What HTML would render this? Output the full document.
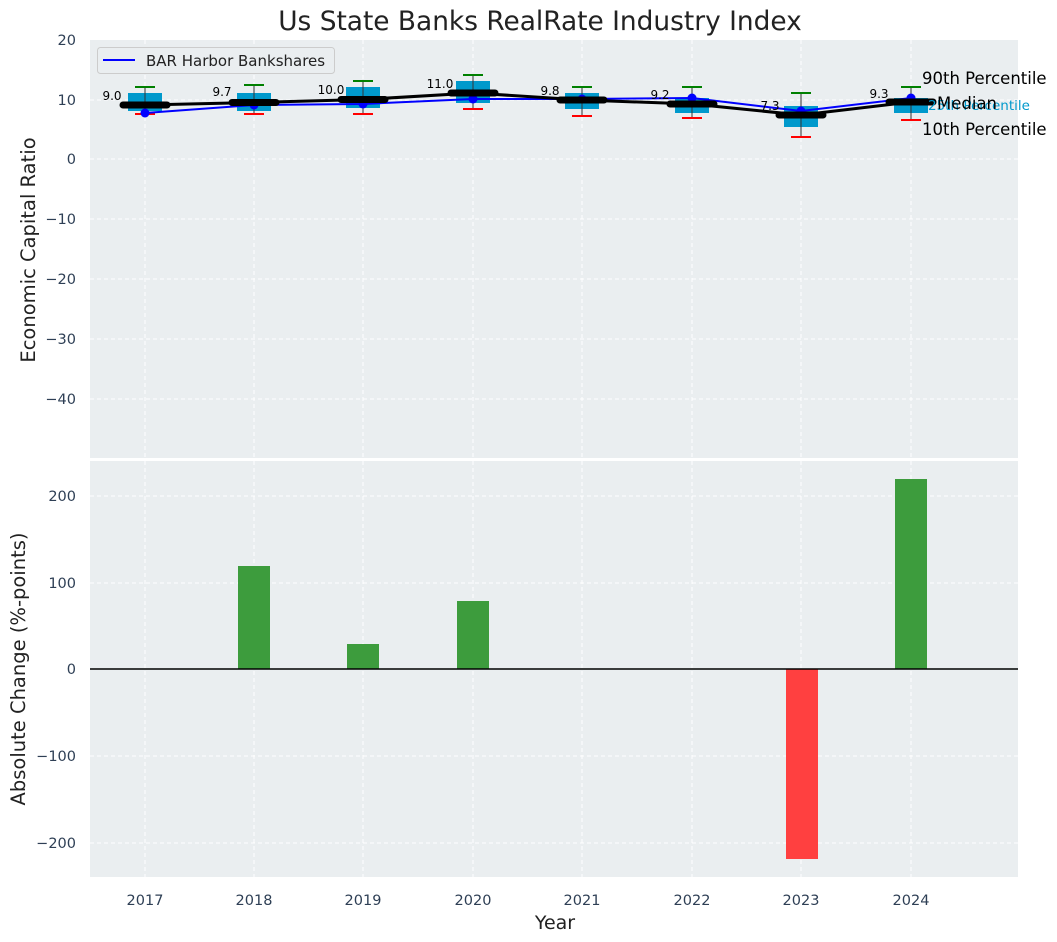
<!DOCTYPE html>
<html><head><meta charset="utf-8"><style>body{margin:0;background:#fff}svg{display:block}</style></head><body>
<svg width="1057" height="942" xmlns="http://www.w3.org/2000/svg" font-family="DejaVu Sans, Liberation Sans, sans-serif">
<text x="540" y="30" font-size="26.4" text-anchor="middle" fill="#222">Us State Banks RealRate Industry Index</text>
<rect x="90" y="40" width="928" height="418" fill="#eaeef0"/>
<g stroke="#fff" stroke-dasharray="4,3" stroke-width="1">
<line x1="90" x2="1018" y1="100" y2="100"/><line x1="90" x2="1018" y1="159" y2="159"/><line x1="90" x2="1018" y1="219" y2="219"/><line x1="90" x2="1018" y1="279" y2="279"/><line x1="90" x2="1018" y1="339" y2="339"/><line x1="90" x2="1018" y1="399" y2="399"/>
<line x1="145" x2="145" y1="40" y2="458"/><line x1="254" x2="254" y1="40" y2="458"/><line x1="363" x2="363" y1="40" y2="458"/><line x1="473" x2="473" y1="40" y2="458"/><line x1="582" x2="582" y1="40" y2="458"/><line x1="692" x2="692" y1="40" y2="458"/><line x1="801" x2="801" y1="40" y2="458"/><line x1="911" x2="911" y1="40" y2="458"/>
</g>
<g font-size="14.5" fill="#2e3f55" text-anchor="end">
<text x="76" y="45">20</text><text x="76" y="105">10</text><text x="76" y="164">0</text><text x="76" y="224">−10</text><text x="76" y="284">−20</text><text x="76" y="344">−30</text><text x="76" y="404">−40</text>
</g>
<text transform="translate(35,250) rotate(-90)" font-size="19.5" fill="#222" text-anchor="middle">Economic Capital Ratio</text>
<g fill="#0099cc">
<rect x="128" y="93" width="34" height="18"/><rect x="237" y="93" width="34" height="18"/><rect x="346" y="87" width="34" height="21"/><rect x="456" y="81" width="34" height="22"/><rect x="565" y="93" width="34" height="16"/><rect x="675" y="98" width="34" height="15"/><rect x="784" y="106" width="34" height="21"/><rect x="894" y="98" width="34" height="15"/>
</g>
<g stroke="#333" stroke-width="1">
<line x1="145" x2="145" y1="87" y2="114"/><line x1="254" x2="254" y1="85" y2="114"/><line x1="363" x2="363" y1="81" y2="114"/><line x1="473" x2="473" y1="75" y2="109"/><line x1="582" x2="582" y1="87" y2="116"/><line x1="692" x2="692" y1="87" y2="118"/><line x1="801" x2="801" y1="93" y2="137"/><line x1="911" x2="911" y1="87" y2="120"/>
</g>
<g stroke="green" stroke-width="2">
<line x1="135" x2="155" y1="87" y2="87"/><line x1="244" x2="264" y1="85" y2="85"/><line x1="353" x2="373" y1="81" y2="81"/><line x1="463" x2="483" y1="75" y2="75"/><line x1="572" x2="592" y1="87" y2="87"/><line x1="682" x2="702" y1="87" y2="87"/><line x1="791" x2="811" y1="93" y2="93"/><line x1="901" x2="921" y1="87" y2="87"/>
</g>
<g stroke="red" stroke-width="2">
<line x1="135" x2="155" y1="114" y2="114"/><line x1="244" x2="264" y1="114" y2="114"/><line x1="353" x2="373" y1="114" y2="114"/><line x1="463" x2="483" y1="109" y2="109"/><line x1="572" x2="592" y1="116" y2="116"/><line x1="682" x2="702" y1="118" y2="118"/><line x1="791" x2="811" y1="137" y2="137"/><line x1="901" x2="921" y1="120" y2="120"/>
</g>
<polyline points="145,113 254,105 363,104 473,99 582,99 692,98 801,111 911,98" fill="none" stroke="#0000ff" stroke-width="2"/>
<g fill="#0000ff"><circle cx="145" cy="113" r="4.5"/><circle cx="254" cy="105" r="4.5"/><circle cx="363" cy="104" r="4.5"/><circle cx="473" cy="99" r="4.5"/><circle cx="582" cy="99" r="4.5"/><circle cx="692" cy="98" r="4.5"/><circle cx="801" cy="111" r="4.5"/><circle cx="911" cy="98" r="4.5"/></g>
<polyline points="145,105 254,102.5 363,99.5 473,93 582,100 692,104 801,115 911,102" fill="none" stroke="#000" stroke-width="3"/>
<g stroke="#000" stroke-width="7" stroke-linecap="round">
<line x1="123" x2="167" y1="105" y2="105"/><line x1="232" x2="276" y1="102.5" y2="102.5"/><line x1="341" x2="385" y1="99.5" y2="99.5"/><line x1="451" x2="495" y1="93" y2="93"/><line x1="560" x2="604" y1="100" y2="100"/><line x1="670" x2="714" y1="104" y2="104"/><line x1="779" x2="823" y1="115" y2="115"/><line x1="889" x2="933" y1="102" y2="102"/>
</g>
<g font-size="12" fill="#000" text-anchor="middle">
<text x="112" y="100">9.0</text><text x="222" y="96">9.7</text><text x="331" y="94">10.0</text><text x="440" y="88">11.0</text><text x="550" y="95">9.8</text><text x="660" y="99">9.2</text><text x="770" y="110">7.3</text><text x="879" y="98">9.3</text>
</g>
<text x="928" y="110" font-size="13.5" fill="#0099cc">25th Percentile</text>
<g font-size="16.5" fill="#000"><text x="922" y="84">90th Percentile</text><text x="937" y="109">Median</text><text x="922" y="135">10th Percentile</text></g>
<rect x="97.5" y="47.5" width="237" height="26" rx="3" fill="#eaeef0" stroke="#ccc"/>
<line x1="103" x2="135" y1="60" y2="60" stroke="#0000ff" stroke-width="2"/>
<text x="146" y="66" font-size="15" fill="#222">BAR Harbor Bankshares</text>
<rect x="90" y="461" width="928" height="416" fill="#eaeef0"/>
<g stroke="#fff" stroke-dasharray="4,3" stroke-width="1">
<line x1="90" x2="1018" y1="496" y2="496"/><line x1="90" x2="1018" y1="583" y2="583"/><line x1="90" x2="1018" y1="756" y2="756"/><line x1="90" x2="1018" y1="843" y2="843"/>
<line x1="145" x2="145" y1="461" y2="877"/><line x1="254" x2="254" y1="461" y2="877"/><line x1="363" x2="363" y1="461" y2="877"/><line x1="473" x2="473" y1="461" y2="877"/><line x1="582" x2="582" y1="461" y2="877"/><line x1="692" x2="692" y1="461" y2="877"/><line x1="801" x2="801" y1="461" y2="877"/><line x1="911" x2="911" y1="461" y2="877"/>
</g>
<g fill="#3d9c3d"><rect x="238" y="566" width="32" height="103"/><rect x="347" y="644" width="32" height="25"/><rect x="457" y="601" width="32" height="68"/><rect x="895" y="479" width="32" height="190"/></g>
<rect x="786" y="669" width="32" height="190" fill="#ff4040"/>
<line x1="90" x2="1018" y1="669" y2="669" stroke="#000" stroke-width="1.5"/>
<g font-size="14.5" fill="#2e3f55" text-anchor="end">
<text x="76" y="501">200</text><text x="76" y="588">100</text><text x="76" y="674">0</text><text x="76" y="761">−100</text><text x="76" y="848">−200</text>
</g>
<text transform="translate(25,669) rotate(-90)" font-size="19.5" fill="#222" text-anchor="middle">Absolute Change (%-points)</text>
<g font-size="14.5" fill="#2e3f55" text-anchor="middle">
<text x="145" y="905">2017</text><text x="254" y="905">2018</text><text x="363" y="905">2019</text><text x="473" y="905">2020</text><text x="582" y="905">2021</text><text x="692" y="905">2022</text><text x="801" y="905">2023</text><text x="911" y="905">2024</text>
</g>
<text x="555" y="929" font-size="19" fill="#222" text-anchor="middle">Year</text>
</svg>
</body></html>
